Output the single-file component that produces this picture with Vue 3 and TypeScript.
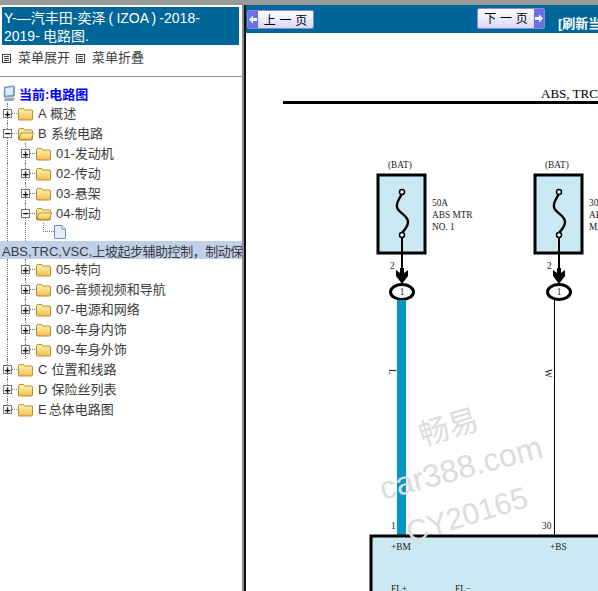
<script setup lang="ts">
// tree menu rows: level 0 = top groups, level 1 = sub groups
interface Row {
  label: string
  level: number
  open?: boolean
  last?: boolean
}

const rowsTop: Row[] = [
  { label: 'A  概述', level: 0 },
  { label: 'B  系统电路', level: 0, open: true },
  { label: '01-发动机', level: 1 },
  { label: '02-传动', level: 1 },
  { label: '03-悬架', level: 1 },
  { label: '04-制动', level: 1, open: true },
]

const rowsBottom: Row[] = [
  { label: '05-转向', level: 1 },
  { label: '06-音频视频和导航', level: 1 },
  { label: '07-电源和网络', level: 1 },
  { label: '08-车身内饰', level: 1 },
  { label: '09-车身外饰', level: 1 },
  { label: 'C  位置和线路', level: 0 },
  { label: 'D  保险丝列表', level: 0 },
  { label: 'E 总体电路图', level: 0, last: true },
]

const fuses = [
  { x: 378, cx: 402, wire: 402, lines: ['50A', 'ABS MTR', 'NO. 1'] },
  { x: 535, cx: 559, wire: 554.5, lines: ['30A', 'ABS', 'MAIN'] },
]

function fusePath(cx: number) {
  return `M${cx} 194 C${cx - 3} 199 ${cx - 6} 203 ${cx - 5} 207 C${cx - 4} 213 ${cx + 6} 215 ${cx + 6} 222 C${cx + 6} 227 ${cx + 2} 230 ${cx} 233`
}

function arrowPath(cx: number) {
  return `M${cx - 6} 270 L${cx - 2} 273 L${cx - 2} 268 L${cx + 2} 268 L${cx + 2} 273 L${cx + 6} 270 L${cx + 6} 276 L${cx} 284 L${cx - 6} 276 Z`
}
</script>

<template>
  <div class="page">
    <!-- shared gradient for the folder icons -->
    <svg class="defs" width="0" height="0">
      <defs>
        <linearGradient id="folderFill" x1="0" y1="0" x2="0" y2="1">
          <stop offset="0" stop-color="#fff3b8" />
          <stop offset="1" stop-color="#f0c04a" />
        </linearGradient>
      </defs>
    </svg>

    <aside class="side">
      <div class="title">Y-—汽丰田-奕泽 ( IZOA ) -2018-<br />2019- 电路图.</div>
      <div class="menu-actions">
        <span class="action"><i class="mini-box"></i>菜单展开</span>
        <span class="action"><i class="mini-box"></i>菜单折叠</span>
      </div>
      <div class="current">
        <svg width="14" height="17" viewBox="0 0 14 17">
          <path d="M2 1.5 L11 .5 Q13 .5 13 2.5 L13 10 Q13 11.5 11 12 L3 12.5 Q1.5 12.5 1.5 11 Z" fill="#7f9dc0" />
          <path d="M3.5 3 L11 2.2 L11 9.5 L3.5 10.5 Z" fill="#d4f0fb" />
          <path d="M3 13 L12 12.5 L13 15 Q8 17 2 16 Z" fill="#9aa6b8" />
        </svg>
        <span>当前:电路图</span>
      </div>

      <div class="tree">
        <div v-for="row in rowsTop" :key="row.label" class="row">
          <span v-if="row.level === 1" class="guide"></span>
          <span class="expander-cell" :class="{ end: row.last }">
            <span class="expander">{{ row.open ? '−' : '+' }}</span>
          </span>
          <svg class="folder" width="16" height="14" viewBox="0 0 16 14">
            <path d="M.5 3 L1.5 1.5 L5.5 1.5 L6.5 3 L13.5 3 Q14.5 3 14.5 4 L14.5 12 Q14.5 13 13.5 13 L1.5 13 Q.5 13 .5 12 Z" fill="url(#folderFill)" stroke="#b98f2c" />
            <path v-if="row.open" d="M1 12.5 L3 6 L15.5 6 L13.5 12.5 Z" fill="url(#folderFill)" stroke="#b98f2c" />
          </svg>
          <span class="label">{{ row.label }}</span>
        </div>

        <div class="row leaf">
          <span class="guide"></span>
          <span class="guide"></span>
          <span class="leaf-line"></span>
          <svg width="12" height="14" viewBox="0 0 12 14">
            <path d="M.5 .5 L8 .5 L11.5 4 L11.5 13.5 L.5 13.5 Z" fill="#e4eefa" stroke="#6d8db5" />
            <path d="M8 .5 L8 4 L11.5 4" fill="#fff" stroke="#6d8db5" />
          </svg>
        </div>

        <div class="selected">ABS,TRC,VSC,<span class="tight">上坡起步辅助控制，制动保持控制系统</span></div>

        <div v-for="row in rowsBottom" :key="row.label" class="row">
          <span v-if="row.level === 1" class="guide"></span>
          <span class="expander-cell" :class="{ end: row.last }">
            <span class="expander">+</span>
          </span>
          <svg class="folder" width="16" height="14" viewBox="0 0 16 14">
            <path d="M.5 3 L1.5 1.5 L5.5 1.5 L6.5 3 L13.5 3 Q14.5 3 14.5 4 L14.5 12 Q14.5 13 13.5 13 L1.5 13 Q.5 13 .5 12 Z" fill="url(#folderFill)" stroke="#b98f2c" />
          </svg>
          <span class="label">{{ row.label }}</span>
        </div>
      </div>
    </aside>

    <main class="viewer">
      <header class="toolbar">
        <button class="page-btn prev">
          <span class="arrow">
            <svg width="8" height="9" viewBox="0 0 8 9"><path d="M0 4.5 L4 .5 L4 3 L8 3 L8 6 L4 6 L4 8.5 Z" fill="#fff" /></svg>
          </span>
          <span class="btn-text">上 一 页</span>
        </button>
        <button class="page-btn next">
          <span class="btn-text">下 一 页</span>
          <span class="arrow">
            <svg width="8" height="9" viewBox="0 0 8 9"><path d="M8 4.5 L4 .5 L4 3 L0 3 L0 6 L4 6 L4 8.5 Z" fill="#fff" /></svg>
          </span>
        </button>
        <span class="refresh">[刷新当前页]</span>
      </header>

      <!-- the wiring diagram, viewBox uses page coordinates -->
      <svg class="diagram" width="352" height="558" viewBox="246 33 352 558">
        <text x="541" y="98" class="heading">ABS, TRC, VSC</text>
        <rect x="283" y="101" width="315" height="3" fill="#000" />

        <g v-for="f in fuses" :key="f.x">
          <text :x="f.cx - 14" y="168" class="small">(BAT)</text>
          <rect :x="f.x" y="175" width="47" height="78" fill="#cbe9f2" stroke="#000" stroke-width="3" />
          <path :d="fusePath(f.cx)" fill="none" stroke="#000" stroke-width="2.4" />
          <circle :cx="f.cx" cy="192" r="2.5" fill="#fff" stroke="#000" stroke-width="1.5" />
          <circle :cx="f.cx" cy="235" r="2.5" fill="#fff" stroke="#000" stroke-width="1.5" />
          <line :x1="f.cx" y1="237" :x2="f.cx" y2="272" stroke="#000" stroke-width="2" />
          <path :d="arrowPath(f.cx)" fill="#000" />
          <text :x="f.cx - 12" y="269" class="small">2</text>
          <text
            v-for="(line, i) in f.lines"
            :key="line"
            :x="f.x + 54"
            :y="206 + i * 12"
            class="small"
          >{{ line }}</text>
          <ellipse :cx="f.cx" cy="292" rx="11.5" ry="7.5" fill="#fff" stroke="#000" stroke-width="3" />
          <text :x="f.cx" y="295" class="small" text-anchor="middle">1</text>
          <line :x1="f.wire" y1="300" :x2="f.wire" y2="535" stroke="#000" stroke-width="1" />
        </g>

        <rect x="397" y="300" width="9" height="235" fill="#0099c4" />
        <text x="0" y="0" class="small" transform="translate(389 369) rotate(90)">L</text>
        <text x="0" y="0" class="small" transform="translate(545 369) rotate(90)">W</text>
        <text x="391" y="529" class="small">1</text>
        <text x="542" y="529" class="small">30</text>

        <rect x="371" y="536" width="240" height="70" fill="#cbe9f2" stroke="#000" stroke-width="3" />
        <text x="391" y="550" class="small">+BM</text>
        <text x="550" y="550" class="small">+BS</text>
        <text x="391" y="592" class="small">FL+</text>
        <text x="455" y="592" class="small">FL−</text>

        <g class="watermark">
          <text transform="translate(423 446) rotate(-17)" font-size="30">畅易</text>
          <text transform="translate(383 500) rotate(-15)" font-size="32">car388.com</text>
          <text transform="translate(410 543) rotate(-17)" font-size="30">CY20165</text>
        </g>
      </svg>
    </main>
  </div>
</template>

<style>
html,
body {
  margin: 0;
  overflow: hidden;
}
</style>

<style scoped>
.page {
  display: flex;
  width: 598px;
  height: 591px;
  border-top: 5px solid #999;
  box-sizing: border-box;
  overflow: hidden;
  background: #fff;
  font-family: "Liberation Sans", "Noto Sans CJK SC", sans-serif;
  font-size: 13px;
  color: #3c3c3c;
}

.defs {
  position: absolute;
}

.side {
  width: 244px;
  flex: none;
  box-sizing: border-box;
  border-right: 2px solid #8a8a8a;
  overflow: hidden;
  background: #fff;
}

.title {
  margin: 2px 3px 0 2px;
  height: 38px;
  padding: 2px 2px 0;
  box-sizing: border-box;
  background: #006699;
  color: #fff;
  font-size: 14px;
  line-height: 18px;
  word-spacing: -.7px;
}

.menu-actions {
  display: flex;
  gap: 6px;
  height: 32px;
  padding: 3px 0 0 2px;
  box-sizing: border-box;
  border-bottom: 1px solid #999;
  line-height: 20px;
}

.action {
  display: flex;
  align-items: center;
  gap: 7px;
  height: 20px;
}

.mini-box {
  width: 5px;
  height: 5px;
  padding: 1px;
  border: 1px solid #444;
  background: repeating-linear-gradient(#444 0 1px, #fff 1px 2px) content-box;
}

.current {
  display: flex;
  align-items: center;
  gap: 3px;
  height: 20px;
  margin-top: 6px;
  padding-left: 2px;
  color: #0000ff;
  font-weight: bold;
}

.tree {
  display: flex;
  flex-direction: column;
}

.row {
  display: flex;
  align-items: center;
  height: 20px;
  white-space: pre;
}

.guide {
  width: 18px;
  height: 100%;
  flex: none;
  box-sizing: border-box;
  margin-left: 7px;
  margin-right: -7px;
  border-left: 1px dotted #777;
}

.expander-cell {
  position: relative;
  display: flex;
  align-items: center;
  width: 18px;
  height: 100%;
  flex: none;
  padding-left: 3px;
  box-sizing: border-box;
}

.expander-cell::before {
  content: "";
  position: absolute;
  left: 7px;
  top: 0;
  bottom: 0;
  border-left: 1px dotted #777;
}

.expander-cell.end::before {
  bottom: 50%;
}

.expander-cell::after {
  content: "";
  position: absolute;
  left: 11px;
  width: 6px;
  border-top: 1px dotted #777;
}

.expander {
  position: relative;
  z-index: 1;
  display: block;
  width: 9px;
  height: 9px;
  border: 1px solid #777;
  background: #fff;
  box-sizing: border-box;
  color: #000;
  font: bold 10px/7px "DejaVu Sans Mono", monospace;
  text-align: center;
}

.folder {
  flex: none;
  margin-top: 2px;
}

.label {
  margin-left: 4px;
  margin-bottom: 1px;
  word-spacing: -1.5px;
}

.leaf {
  height: 18px;
}

.leaf-line {
  width: 11px;
  height: 50%;
  margin-left: 7px;
  margin-top: -9px;
  box-sizing: border-box;
  border-left: 1px dotted #777;
  border-bottom: 1px dotted #777;
  flex: none;
}

.selected {
  height: 18px;
  padding-left: 2px;
  line-height: 21px;
  background: #bfd0e8;
  white-space: nowrap;
  overflow: hidden;
}

.tight {
  letter-spacing: -.45px;
}

.viewer {
  flex: 1;
  min-width: 0;
  border-left: 2px solid #111;
  overflow: hidden;
  background: #fff;
}

.toolbar {
  display: flex;
  align-items: center;
  height: 28px;
  padding-left: 1px;
  background: #006699;
  white-space: nowrap;
}

.page-btn {
  display: flex;
  align-items: stretch;
  height: 19px;
  margin-top: 1px;
  width: 67px;
  flex: none;
  padding: 0;
  border: 1px solid #8a8ad8;
  border-radius: 2px;
  background: linear-gradient(#ffffff, #d8d8fa);
  color: #000;
  font: 12px "Noto Sans CJK SC", sans-serif;
  word-spacing: 1px;
}

.page-btn.next {
  margin-left: 163px;
  width: 68px;
  height: 21px;
  margin-top: -1px;
}

.arrow {
  display: flex;
  align-items: center;
  justify-content: center;
  width: 10px;
  flex: none;
  background: #6b70e6;
}

.btn-text {
  flex: 1;
  line-height: 17px;
  text-align: center;
}

.refresh {
  margin-left: 13px;
  margin-top: 6px;
  color: #fff;
  font-weight: bold;
  font-size: 13px;
}

.diagram {
  display: block;
}

.heading {
  font: 13px "Liberation Serif", serif;
}

.small {
  font: 9.3px "Liberation Serif", serif;
  fill: #222;
}

.watermark {
  fill: #dcdcdc;
  font-family: "Liberation Sans", "Noto Sans CJK SC", sans-serif;
}
</style>
